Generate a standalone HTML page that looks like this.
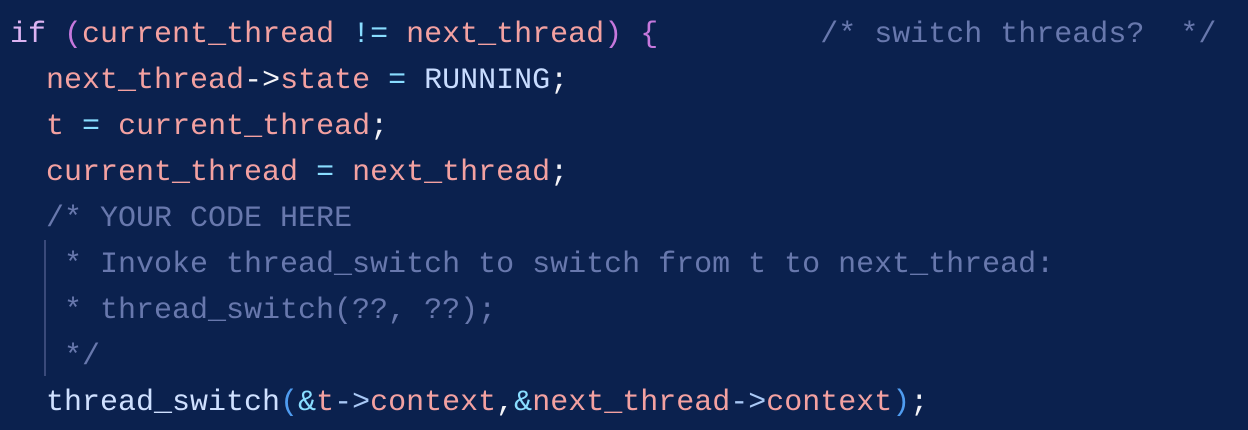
<!DOCTYPE html>
<html><head><meta charset="utf-8"><style>
html,body{margin:0;padding:0;background:#0b214e;width:1248px;height:430px;overflow:hidden}
pre{margin:0;position:absolute;left:10px;top:12px;font-family:"Liberation Mono","DejaVu Sans Mono",monospace;font-size:30px;line-height:46px;color:#f2f2f5;font-weight:normal}
.k{color:#dcb3f2}.p{color:#c678dd}.v{color:#f3a1a1}.o{color:#89ddff}.w{color:#f4f4f8}
.c{color:#6878ad}.f{color:#cfe0ff}.b{color:#4f9cf0}.a{color:#a9c8f5}.r{color:#c8dcff}
.bar{position:absolute;left:44px;top:240px;width:2px;height:136px;background:#3a4a7a}
</style></head><body>
<div class="bar"></div>
<pre><span class="k">if</span> <span class="p">(</span><span class="v">current_thread</span> <span class="o">!=</span> <span class="v">next_thread</span><span class="p">)</span> <span class="p">{</span>         <span class="c">/* switch threads?  */</span>
  <span class="v">next_thread</span><span class="w">-&gt;</span><span class="v">state</span> <span class="o">=</span> <span class="r">RUNNING</span><span class="w">;</span>
  <span class="v">t</span> <span class="o">=</span> <span class="v">current_thread</span><span class="w">;</span>
  <span class="v">current_thread</span> <span class="o">=</span> <span class="v">next_thread</span><span class="w">;</span>
  <span class="c">/* YOUR CODE HERE</span>
<span class="c">   * Invoke thread_switch to switch from t to next_thread:</span>
<span class="c">   * thread_switch(??, ??);</span>
<span class="c">   */</span>
  <span class="f">thread_switch</span><span class="b">(</span><span class="o">&amp;</span><span class="v">t</span><span class="a">-&gt;</span><span class="v">context</span><span class="w">,</span><span class="o">&amp;</span><span class="v">next_thread</span><span class="a">-&gt;</span><span class="v">context</span><span class="b">)</span><span class="w">;</span></pre>
</body></html>
